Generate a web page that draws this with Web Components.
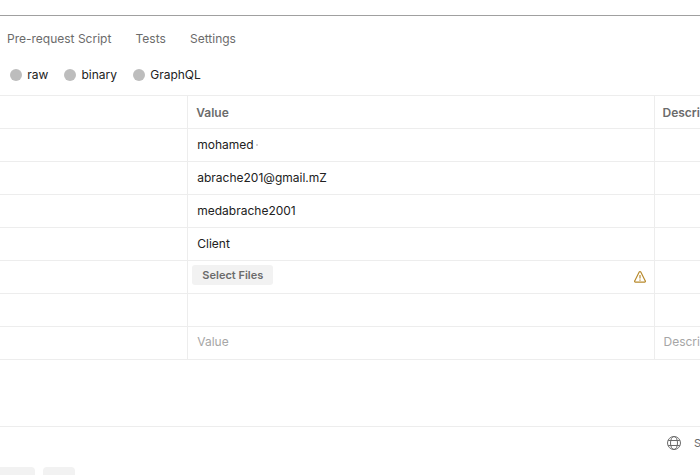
<!DOCTYPE html>
<html lang="en">
<head>
<meta charset="utf-8">
<title>Request body</title>
<style>
html,body{margin:0;width:700px;height:475px;overflow:hidden;background:#fff}
body{font:12px/16px Inter,"Liberation Sans",sans-serif;color:#212121}
</style>
</head>
<body>
<request-page></request-page>
<script>
function define(name, html) {
  const template = document.createElement('template');
  template.innerHTML = html;
  customElements.define(name, class extends HTMLElement {
    constructor() {
      super();
      this.attachShadow({ mode: 'open' }).append(template.content.cloneNode(true));
    }
  });
}

define('body-mode', `
<style>
:host{display:flex;align-items:center;gap:5.2px}
i{width:12px;height:12px;border-radius:50%;background:#bdbdbd}
</style><i></i><span><slot></slot></span>`);

define('file-button', `
<style>
:host{display:block;width:81px}
button{display:block;width:100%;height:20px;padding:0 0 0 .6px;border:0;border-radius:3px;background:#f2f2f2;color:#6b6b6b;font:600 11px/20px Inter,"Liberation Sans",sans-serif;text-align:center}
</style><button><slot></slot></button>`);

define('warning-icon', `
<style>:host{display:block;width:12px;height:12px}svg{display:block}</style>
<svg width="12" height="12" viewBox="0 0 12 12" fill="none" stroke="#b88a2d" stroke-width="1.2" stroke-linejoin="round">
<path d="M5.2 1.1a.9.9 0 0 1 1.6 0l4.5 8.8a.8.8 0 0 1-.7 1.2H1.4a.8.8 0 0 1-.7-1.2z"/><path d="M6 4v3.6M6 8.5v1.2"/></svg>`);

define('globe-icon', `
<style>:host{display:block;width:14px;height:14px}svg{display:block}</style>
<svg width="14" height="14" viewBox="0 0 14 14" fill="none" stroke="#6b6b6b">
<circle cx="7" cy="7" r="6.5"/><ellipse cx="7" cy="7" rx="3.5" ry="6.5"/><path d="M1.2 4.5h11.6M1.2 9.5h11.6"/></svg>`);

define('param-row', `
<style>
:host{display:grid;grid-template-columns:187px 467px 46px;height:32px;border-bottom:1px solid #ededed}
div{display:flex;align-items:center;box-sizing:border-box;min-width:0;white-space:nowrap;overflow:hidden}
div+div{border-left:1px solid #ededed;padding-left:9.25px}
div.d{padding-left:8.5px}
:host([head]){color:#6b6b6b;font-weight:600}
:host([head]) div+div{padding-left:8.25px;padding-top:2px}
:host([head]) div.d{padding-left:7.5px}
:host([hint]){color:#a6a6a6}
:host([hint]) div{padding-bottom:2px}
:host([file]) .v{padding:0 8px 4px 4px;justify-content:space-between}
::slotted(warning-icon){position:relative;top:2px}
</style>
<div></div><div class="v"><slot></slot></div><div class="d"><slot name="description"></slot></div>`);

define('space-mark', `
<style>:host{display:inline-block;width:2px;height:2px;margin-left:2.4px;background:#d6d6d6}</style>`);

define('request-page', `
<style>
:host{display:flex;flex-direction:column;width:700px;height:475px;background:#fff;overflow:hidden}
header{flex:none;height:15px;border-bottom:1px solid #a0a0a0}
nav{flex:none;display:flex;gap:24.2px;height:46px;align-items:center;padding-left:7px;color:#6b6b6b}
.modes{flex:none;box-sizing:border-box;display:flex;align-items:flex-start;gap:16px;height:33px;padding:5px 0 0 10px}
main{flex:none;height:330px;border-top:1px solid #ededed}
footer{flex:1;display:flex;flex-direction:column;justify-content:space-between;border-top:1px solid #ededed;color:#6b6b6b}
.status{display:flex;justify-content:flex-end;align-items:center;gap:13px;height:32px;white-space:nowrap}
.status span{width:6px;overflow:hidden;font-size:11px}
.taskbar{display:flex;gap:8px;height:8px}
.taskbar i{width:35px;background:#f2f2f2;border-radius:0 4px 0 0}
.taskbar i+i{width:32px;border-radius:4px 4px 0 0}
</style>
<header></header>
<nav><span>Pre-request Script</span><span>Tests</span><span>Settings</span></nav>
<section class="modes"><body-mode>raw</body-mode><body-mode>binary</body-mode><body-mode>GraphQL</body-mode></section>
<main>
<param-row head>Value<span slot="description">Descri</span></param-row>
<param-row>mohamed<space-mark></space-mark></param-row>
<param-row>abrache201@gmail.mZ</param-row>
<param-row>medabrache2001</param-row>
<param-row>Client</param-row>
<param-row file><file-button>Select Files</file-button><warning-icon></warning-icon></param-row>
<param-row></param-row>
<param-row hint>Value<span slot="description">Descri</span></param-row>
</main>
<footer><div class="status"><globe-icon></globe-icon><span>S</span></div><div class="taskbar"><i></i><i></i></div></footer>`);
</script>
</body>
</html>
